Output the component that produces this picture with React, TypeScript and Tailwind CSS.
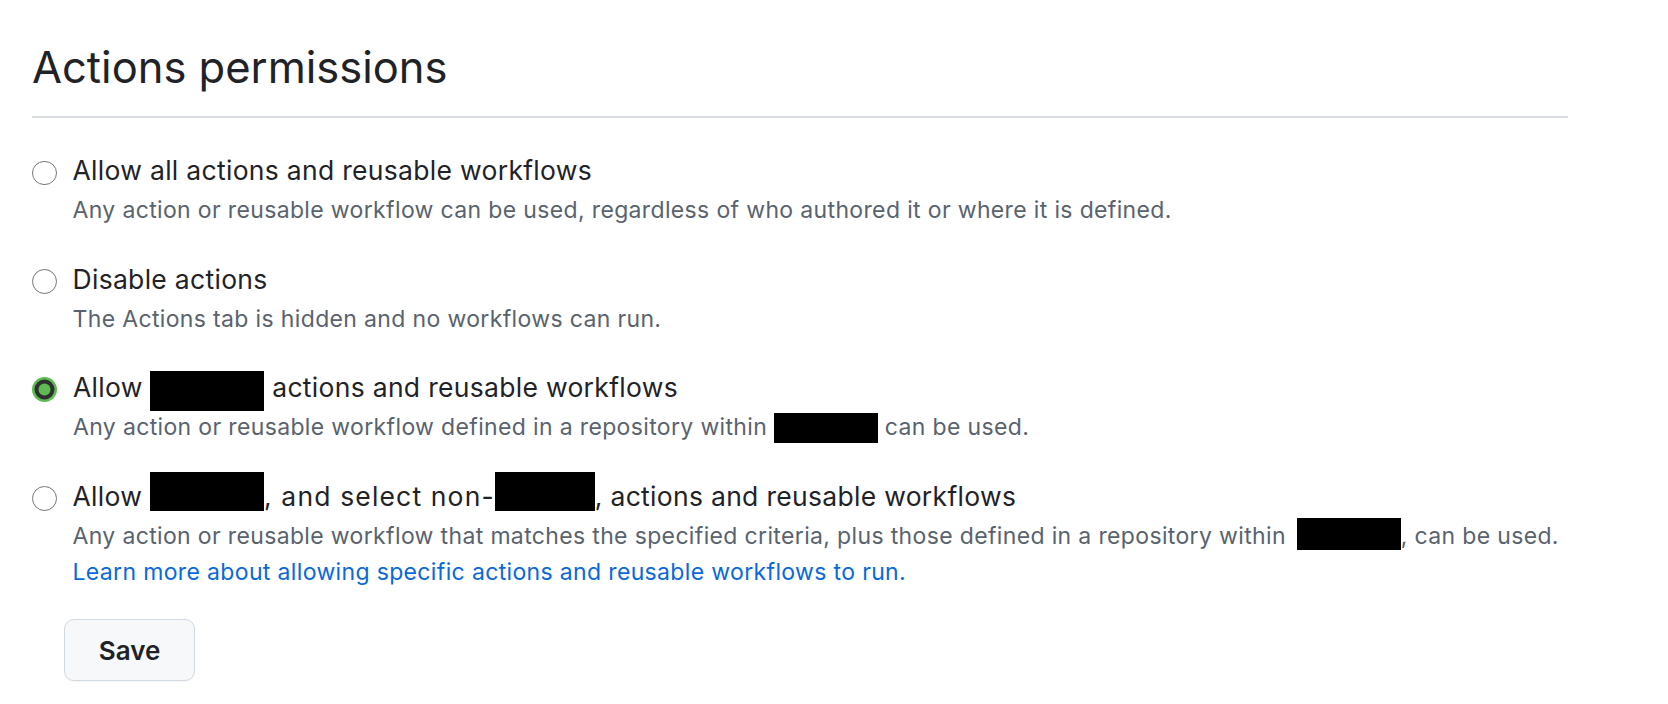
import { useState } from "react";

type Option = {
  id: string;
  label: React.ReactNode;
  description: React.ReactNode;
  link?: string;
};

function Redacted({ className }: { className: string }) {
  return <span className={`inline-block bg-black align-top ${className}`} />;
}

function Radio({ checked }: { checked: boolean }) {
  if (checked) {
    return (
      <svg width="25" height="25" viewBox="0 0 25 25" className="mt-[6px] shrink-0">
        <circle cx="12.5" cy="12.5" r="12.5" fill="#5dbb52" />
        <circle cx="12.5" cy="12.5" r="10" fill="#2e312f" />
        <circle cx="12.5" cy="12.5" r="6" fill="#5dbb52" />
      </svg>
    );
  }
  return (
    <span className="mt-[6.5px] block h-[24.5px] w-[24.5px] shrink-0 rounded-full border-[1.5px] border-[#767676] bg-white" />
  );
}

const OPTIONS: Option[] = [
  {
    id: "all",
    label: "Allow all actions and reusable workflows",
    description:
      "Any action or reusable workflow can be used, regardless of who authored it or where it is defined.",
  },
  {
    id: "disable",
    label: "Disable actions",
    description: "The Actions tab is hidden and no workflows can run.",
  },
  {
    id: "local",
    label: (
      <>
        Allow <Redacted className="mb-[-8px] h-[40px] w-[114px]" /> actions and reusable workflows
      </>
    ),
    description: (
      <>
        Any action or reusable workflow defined in a repository within{" "}
        <Redacted className="mt-[2px] mb-[-2px] h-[30px] w-[104px]" /> can be used.
      </>
    ),
  },
  {
    id: "selected",
    label: (
      <>
        Allow <Redacted className="mt-[-8px] mb-[1px] h-[39px] w-[114px]" />
        <span className="tracking-[1.15px]">, and select non-</span>
        <Redacted className="mt-[-8px] mb-[1px] h-[39px] w-[100px]" />, actions and reusable workflows
      </>
    ),
    description: (
      <>
        Any action or reusable workflow that matches the specified criteria, plus those defined in a
        repository within <Redacted className="mt-[-2px] mb-[2px] ml-[4px] h-[32px] w-[104px]" />, can be used.
      </>
    ),
    link: "Learn more about allowing specific actions and reusable workflows to run.",
  },
];

export default function App() {
  const [selected, setSelected] = useState("local");

  return (
    <div className="h-[704px] w-full bg-white pl-[32px] pt-[41px] font-['Inter',sans-serif] text-[#1f2328]">
      <h2 className="w-[1536px] border-b-2 border-[#d8dee4] pb-[23px] text-[43.5px] font-normal leading-[52px]">
        Actions permissions
      </h2>

      <div className="mt-[36px] flex flex-col gap-[36.5px]">
        {OPTIONS.map((option) => (
          <div
            key={option.id}
            onClick={() => setSelected(option.id)}
            className="flex cursor-pointer items-start gap-[16px]"
          >
            <Radio checked={selected === option.id} />
            <div className="flex flex-col">
              <div className="text-[26.5px] leading-[32px] tracking-[0.3px]">{option.label}</div>
              <div className="mt-[8px] text-[23px] leading-[32px] tracking-[0.35px] text-[#59636e]">
                {option.description}
              </div>
              {option.link && (
                <a href="#" className="mt-[4.5px] text-[23px] leading-[32px] tracking-[0.35px] text-[#0969da]">
                  {option.link}
                </a>
              )}
            </div>
          </div>
        ))}
      </div>

      <button
        type="button"
        className="ml-[32px] mt-[31px] h-[62px] w-[131px] rounded-[10px] border-[1.5px] border-[#d1d9e0] bg-[#f6f8fa] text-[26px] font-semibold text-[#1f2328] shadow-[0_1px_0_rgba(31,35,40,0.04)]"
      >
        Save
      </button>
    </div>
  );
}
